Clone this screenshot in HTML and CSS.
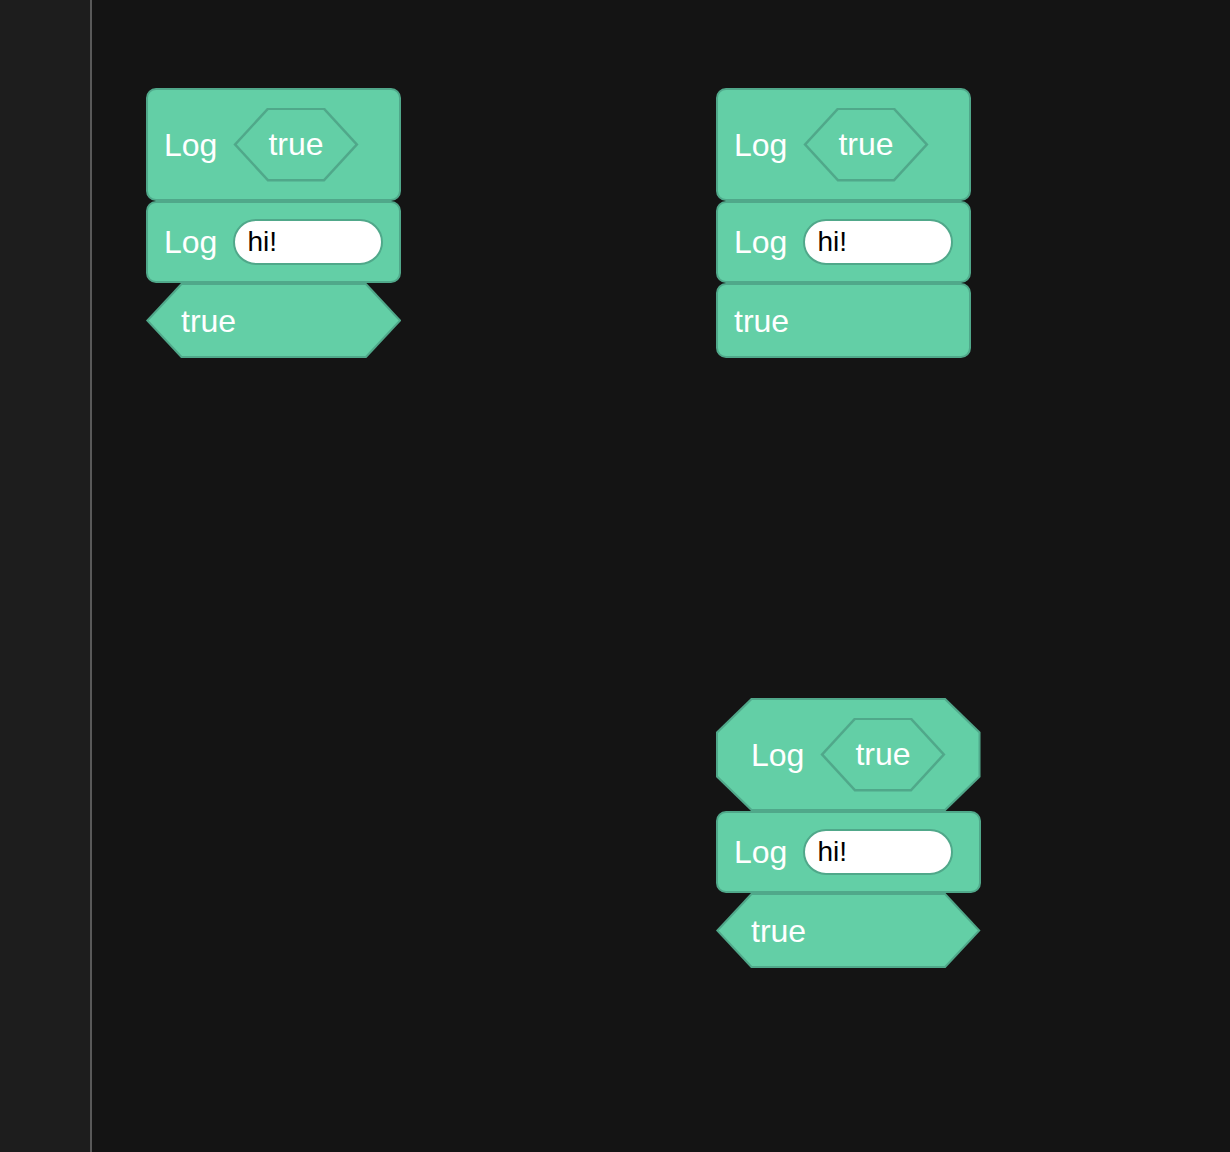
FILE: index.html
```html
<!DOCTYPE html>
<html lang="en">
<head>
    <meta charset="UTF-8">
    <meta name="viewport" content="width=device-width, initial-scale=1.0">
    <title>Blocks</title>
    <link rel="stylesheet" href="styles.css">
</head>
<body>
    <aside class="sidebar"></aside>

    <main class="canvas">
        <!-- stack 1: rounded, rounded, hex -->
        <div class="stack stack-a">
            <div class="block block-tall">
                <span class="label">Log</span>
                <span class="bool"><span>true</span></span>
            </div>
            <div class="block block-input">
                <span class="label">Log</span>
                <span class="field">hi!</span>
            </div>
            <div class="hexblock"><span class="label">true</span></div>
        </div>

        <!-- stack 2: all rounded -->
        <div class="stack stack-b">
            <div class="block block-tall">
                <span class="label">Log</span>
                <span class="bool"><span>true</span></span>
            </div>
            <div class="block block-input">
                <span class="label">Log</span>
                <span class="field">hi!</span>
            </div>
            <div class="block block-text"><span class="label">true</span></div>
        </div>

        <!-- stack 3: octagon, rounded, hex -->
        <div class="stack stack-c">
            <div class="octblock">
                <span class="label">Log</span>
                <span class="bool"><span>true</span></span>
            </div>
            <div class="block block-input">
                <span class="label">Log</span>
                <span class="field">hi!</span>
            </div>
            <div class="hexblock"><span class="label">true</span></div>
        </div>
    </main>
</body>
</html>
```

FILE: styles.css
```css
:root {
    --fill: #63cfa6;
    --edge: #50a88a;
}
* {
    box-sizing: border-box;
}
body {
    margin: 0;
    height: 100vh;
    display: flex;
    background: #141414;
    font-family: "Liberation Sans", Arial, sans-serif;
    font-size: 32px;
    color: #fff;
    overflow: hidden;
}
.sidebar {
    width: 92px;
    flex-shrink: 0;
    background: #1d1d1d;
    border-right: 2px solid #595959;
}
.canvas {
    flex: 1;
    position: relative;
}

/* stacks sit on a free canvas */
.stack {
    position: absolute;
    display: flex;
    flex-direction: column;
}
.stack-a { left: 54px; top: 88px; }
.stack-b { left: 624px; top: 88px; }
.stack-c { left: 624px; top: 698px; }

.label {
    position: relative;
    line-height: 36px;
    white-space: nowrap;
}

/* rounded blocks */
.block {
    display: flex;
    align-items: center;
    gap: 16px;
    padding: 0 16px;
    background: var(--fill);
    border: 2px solid var(--edge);
    border-radius: 10px;
}
.block-tall {
    padding-top: 17.5px;
    padding-bottom: 17.5px;
}
.block-input {
    padding-top: 16px;
    padding-bottom: 16px;
}
.block-text {
    padding-top: 17.5px;
    padding-bottom: 17.5px;
}

/* text input pill */
.field {
    width: 150px;
    height: 46px;
    display: flex;
    align-items: center;
    padding: 0 12px;
    background: #fff;
    color: #000;
    font-size: 28px;
    border: 2px solid var(--edge);
    border-radius: 23px;
}

/* hexagon boolean literal */
.bool {
    position: relative;
    height: 74px;
    display: flex;
    align-items: center;
    padding: 0 35px;
    background: var(--edge);
    clip-path: polygon(34px 0, calc(100% - 34px) 0, 100% 50%, calc(100% - 34px) 100%, 34px 100%, 0 50%);
}
.bool::before {
    content: "";
    position: absolute;
    inset: 2.5px;
    background: var(--fill);
    clip-path: polygon(32.6px 0, calc(100% - 32.6px) 0, calc(100% - 0.9px) 50%, calc(100% - 32.6px) 100%, 32.6px 100%, 0.9px 50%);
}
.bool span {
    position: relative;
}

/* hexagon reporter block */
.hexblock {
    position: relative;
    height: 75px;
    display: flex;
    align-items: center;
    padding: 0 35px;
    background: var(--edge);
    clip-path: polygon(35px 0, calc(100% - 35px) 0, 100% 50%, calc(100% - 35px) 100%, 35px 100%, 0 50%);
}
.hexblock::before {
    content: "";
    position: absolute;
    inset: 2px;
    background: var(--fill);
    clip-path: polygon(34px 0, calc(100% - 34px) 0, calc(100% - 0.7px) 50%, calc(100% - 34px) 100%, 34px 100%, 0.7px 50%);
}

/* octagon block */
.octblock {
    position: relative;
    height: 113px;
    display: flex;
    align-items: center;
    gap: 16px;
    padding: 0 35px;
    background: var(--edge);
    clip-path: polygon(35px 0, calc(100% - 35px) 0, 100% 34px, 100% calc(100% - 34px), calc(100% - 35px) 100%, 35px 100%, 0 calc(100% - 34px), 0 34px);
}
.octblock::before {
    content: "";
    position: absolute;
    inset: 2px;
    background: var(--fill);
    clip-path: polygon(34px 0, calc(100% - 34px) 0, 100% 33px, 100% calc(100% - 33px), calc(100% - 34px) 100%, 34px 100%, 0 calc(100% - 33px), 0 33px);
}
.octblock .bool {
    z-index: 1;
}
```
